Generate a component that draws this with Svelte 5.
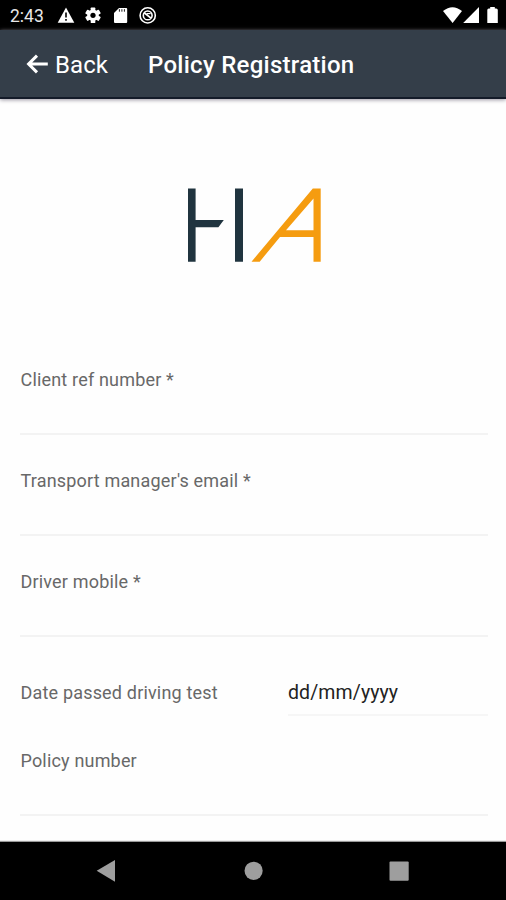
<script>
  const fields = ["Client ref number *", "Transport manager's email *", 'Driver mobile *'];
</script>

<div class="phone">
  <div class="status">
    <span class="clock">2:43</span>
    <svg class="left-icons" width="102" height="30" viewBox="56 0 102 30">
      <path fill="#fff" d="M66 7.5 74.3 22.8H57.7Z" />
      <path stroke="#000" stroke-width="1.6" d="M66 12.5v5M66 19v1.8" />
      <g fill="#fff" transform="translate(93 15.3)">
        {#each [0, 60, 120] as angle}
          <rect x="-2.3" y="-7.8" width="4.6" height="15.6" rx=".7" transform="rotate({angle})" />
        {/each}
        <circle r="5.7" />
        <circle r="2.6" fill="#000" />
      </g>
      <path fill="#fff" d="M119 8h7.2q1 0 1 1v13q0 1-1 1h-11.2q-1 0-1-1V13Z" />
      <path stroke="#000" stroke-width=".9" d="M119.4 9.2v2.5M121.9 9.2v2.5M124.4 9.2v2.5" />
      <g fill="none" stroke="#fff" transform="translate(147.7 15.4)">
        <circle r="7.6" stroke-width="1.6" />
        <circle r="4.4" stroke-width="1.6" />
        <path stroke-width="1.8" d="m-3.5-2.7 6.8 5.4" />
        <path stroke-width="1.2" d="M-1-1.8h4" />
      </g>
    </svg>
    <svg class="right-icons" width="58" height="30" viewBox="442 0 58 30" fill="#fff">
      <path d="M443 11.1Q452.5 3.2 462 11.1L452.6 22.9Z" />
      <path d="M479 7v16H463.2Z" />
      <path d="M490.2 7h4.6v1.5h1.4q1.6 0 1.6 1.6V23H487.3V10.1q0-1.6 1.5-1.6h1.4Z" />
    </svg>
  </div>

  <header>
    <button class="back" type="button">
      <svg width="24" height="22" viewBox="0 0 24 22" fill="none" stroke="#fff" stroke-width="3">
        <path d="M22.8 11H4M12 2.6 3.6 11l8.4 8.4" />
      </svg>
      <span>Back</span>
    </button>
    <h1>Policy Registration</h1>
  </header>

  <main>
    <div class="logo">
      <svg width="138" height="76" viewBox="186 187 138 76">
        <path fill="#20343f" d="M188 188.5h7.6v31.5h28.2l-5.4 7.3h-22.8v34.4H188ZM235 188.5h8v73.2h-8Z" />
        <path fill="#f59c10" fill-rule="evenodd" d="M312.8 188.5h7.9v73.2h-7.2v-24.8H280l-20.3 24.8H251.5ZM313.5 198.6 286 230.3h27.5Z" />
      </svg>
    </div>
    {#each fields as label}
      <label class="field"><span>{label}</span><input type="text" /></label>
    {/each}
    <div class="date-row">
      <span class="date-label">Date passed driving test</span>
      <span class="date-value">dd/mm/yyyy</span>
    </div>
    <label class="field last"><span>Policy number</span><input type="text" /></label>
  </main>

  <nav>
    <svg width="506" height="58" viewBox="0 0 506 58" fill="#9e9e9e">
      <path d="M96.7 28.7 115 18v21.8Z" />
      <circle cx="253.6" cy="28.8" r="9.1" />
      <rect x="389.5" y="19.5" width="19.2" height="19.2" rx="1" />
    </svg>
  </nav>
</div>

<style>
  .phone {
    width: 506px;
    height: 900px;
    display: flex;
    flex-direction: column;
    overflow: hidden;
    background: #fefefe;
    font-family: Roboto, sans-serif;
  }
  .status {
    height: 30px;
    flex: none;
    display: flex;
    align-items: center;
    background: #000;
    color: #e8e8e8;
  }
  .clock {
    width: 46px;
    padding-left: 10px;
    font-size: 17.5px;
    line-height: 30px;
    padding-top: 2px;
    font-weight: 400;
  }
  .right-icons { margin-left: auto; margin-right: 6px; }
  header {
    box-sizing: border-box;
    height: 69px;
    flex: none;
    display: flex;
    align-items: center;
    background: #343e49;
    border-bottom: 2px solid #141b29;
    box-shadow: 0 1px 4px #9a96a2;
    color: #fff;
  }
  .back {
    display: flex;
    align-items: center;
    width: 123px;
    margin-left: 25px;
    padding: 0;
    border: 0;
    background: none;
    color: inherit;
    font: 400 24px/32px Roboto, sans-serif;
    letter-spacing: 0.1px;
  }
  .back span { margin-left: 6px; padding-top: 2px; }
  h1 {
    margin: 0;
    padding-top: 3px;
    font-size: 24px;
    line-height: 32px;
    font-weight: 500;
    letter-spacing: 0.27px;
    white-space: nowrap;
  }
  main { flex: 1; padding: 0 18px 0 20px; }
  .logo {
    height: 249px;
    display: flex;
    justify-content: center;
    padding-top: 88px;
    box-sizing: border-box;
    padding-left: 2px;
  }
  .field {
    display: block;
    box-sizing: border-box;
    height: 101px;
    padding-top: 20px;
    font-size: 18px;
    line-height: 24px;
    color: #686868;
    letter-spacing: 0.18px;
  }
  .field span { display: block; padding-left: 0.5px; white-space: nowrap; }
  .field input {
    display: block;
    box-sizing: border-box;
    width: 100%;
    height: 43px;
    padding: 0;
    border: 0;
    border-bottom: 2px solid #f3f3f3;
    background: none;
    font: 18px Roboto, sans-serif;
    outline: 0;
  }
  .date-row {
    display: flex;
    height: 78px;
    padding-top: 29px;
    box-sizing: border-box;
    font-size: 18px;
    line-height: 24px;
  }
  .date-label {
    box-sizing: border-box;
    width: 268px;
    padding: 1px 0 0 0.5px;
    color: #686868;
    letter-spacing: 0.18px;
    white-space: nowrap;
  }
  .date-value {
    flex: 1;
    box-sizing: border-box;
    height: 36px;
    padding-top: 1px;
    border-bottom: 2px solid #f6f6f6;
    color: #222;
    font-size: 19.5px;
    letter-spacing: 0.1px;
  }
  nav { height: 58px; flex: none; background: #000; box-shadow: 0 -1px 1px #999; }
  nav svg { display: block; }
</style>
